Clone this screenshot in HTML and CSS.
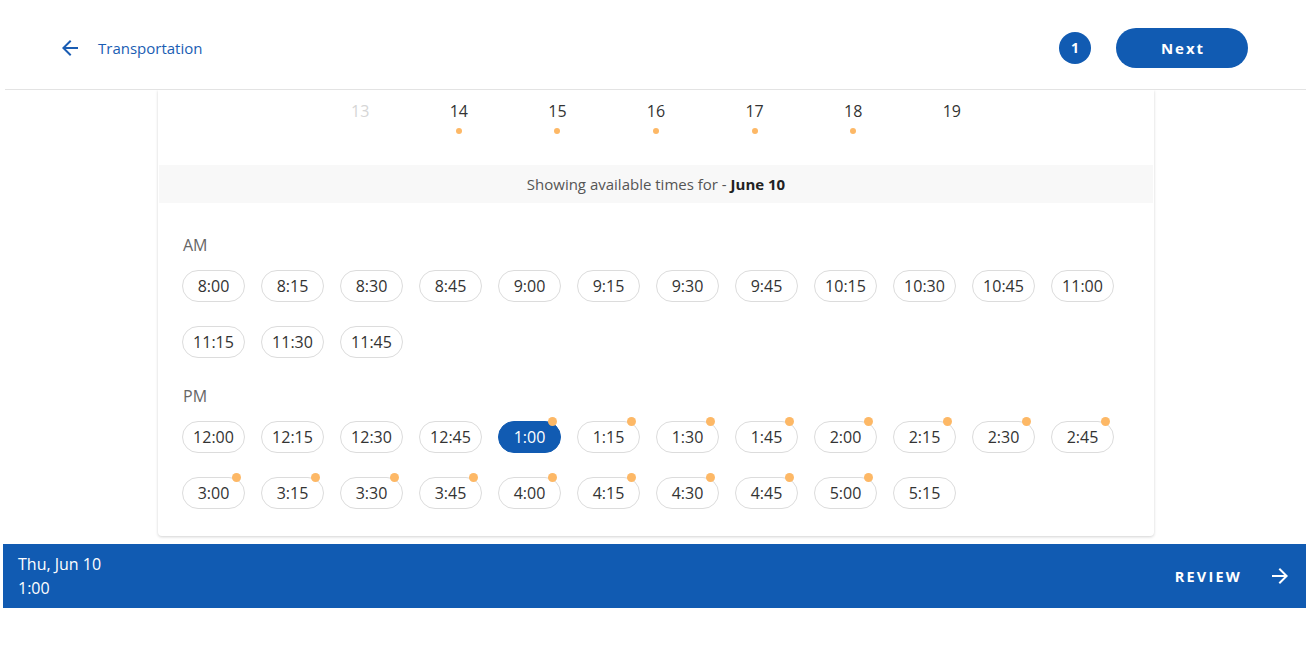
FILE: index.html
```html
<!DOCTYPE html>
<html>
<head>
<meta charset="utf-8">
<link rel="stylesheet" href="styles.css">
</head>
<body>
<div class="app">
  <header class="header">
    <a class="back">
      <svg class="back-icon" viewBox="0 0 24 24" width="24" height="24"><path d="M20 11H7.83l5.59-5.59L12 4l-8 8 8 8 1.41-1.41L7.83 13H20v-2z" fill="#1a5db3"/></svg>
      <span>Transportation</span>
    </a>
    <div class="header-right">
      <span class="badge">1</span>
      <button class="next">Next</button>
    </div>
  </header>
  <main class="scroll">
    <section class="card">
      <div class="days">
        <div class="day disabled"><span>13</span><i></i></div>
        <div class="day"><span>14</span><i class="dot"></i></div>
        <div class="day"><span>15</span><i class="dot"></i></div>
        <div class="day"><span>16</span><i class="dot"></i></div>
        <div class="day"><span>17</span><i class="dot"></i></div>
        <div class="day"><span>18</span><i class="dot"></i></div>
        <div class="day"><span>19</span><i></i></div>
      </div>
      <div class="band">Showing available times for - <b>June 10</b></div>
      <div class="slots">
        <div class="period">AM</div>
        <div class="pills">
          <span class="pill">8:00</span><span class="pill">8:15</span><span class="pill">8:30</span><span class="pill">8:45</span><span class="pill">9:00</span><span class="pill">9:15</span><span class="pill">9:30</span><span class="pill">9:45</span><span class="pill">10:15</span><span class="pill">10:30</span><span class="pill">10:45</span><span class="pill">11:00</span><span class="pill">11:15</span><span class="pill">11:30</span><span class="pill">11:45</span>
        </div>
        <div class="period pm">PM</div>
        <div class="pills">
          <span class="pill">12:00</span><span class="pill">12:15</span><span class="pill">12:30</span><span class="pill">12:45</span><span class="pill selected mark">1:00</span><span class="pill mark">1:15</span><span class="pill mark">1:30</span><span class="pill mark">1:45</span><span class="pill mark">2:00</span><span class="pill mark">2:15</span><span class="pill mark">2:30</span><span class="pill mark">2:45</span><span class="pill mark">3:00</span><span class="pill mark">3:15</span><span class="pill mark">3:30</span><span class="pill mark">3:45</span><span class="pill mark">4:00</span><span class="pill mark">4:15</span><span class="pill mark">4:30</span><span class="pill mark">4:45</span><span class="pill mark">5:00</span><span class="pill">5:15</span>
        </div>
      </div>
    </section>
  </main>
  <footer class="bar">
    <div class="summary">
      <div>Thu, Jun 10</div>
      <div>1:00</div>
    </div>
    <a class="review">
      <span>REVIEW</span>
      <svg viewBox="0 0 24 24" width="24" height="24"><path d="M12 4l-1.41 1.41L16.17 11H4v2h12.17l-5.58 5.59L12 20l8-8z" fill="#fff"/></svg>
    </a>
  </footer>
</div>
</body>
</html>
```
FILE: styles.css
```css
* { box-sizing: border-box; }
html, body { margin: 0; padding: 0; background: #fff; }
body {
  font-family: "Open Sans", "Noto Sans", sans-serif;
  color: #333;
  width: 1306px;
  height: 646px;
  overflow: hidden;
}
.app { padding-left: 3px; }

.header {
  height: 90px;
  margin-left: 2px;
  border-bottom: 1px solid #e3e3e3;
  display: flex;
  align-items: center;
  justify-content: space-between;
  padding: 6px 58px 0 53px;
}
.back {
  display: flex;
  align-items: center;
  gap: 16px;
  color: #1a5db3;
  font-size: 15px;
  cursor: pointer;
}
.back-icon { display: block; }
.header-right {
  display: flex;
  align-items: center;
  gap: 25px;
}
.badge {
  width: 32px;
  height: 32px;
  border-radius: 50%;
  background: #115bb2;
  color: #fff;
  font-weight: 700;
  font-size: 14px;
  display: flex;
  align-items: center;
  justify-content: center;
}
.next {
  width: 132px;
  height: 40px;
  border: 0;
  border-radius: 20px;
  background: #115bb2;
  color: #fff;
  font-family: inherit;
  font-weight: 700;
  font-size: 15px;
  letter-spacing: 2px;
  padding: 0 0 0 2px;
}

.scroll {
  height: 454px;
  overflow: hidden;
  padding-top: 10px;
}
.card {
  width: 996px;
  margin: -10px 0 0 155px;
  background: #fff;
  border-radius: 0 0 4px 4px;
  box-shadow: 0 1px 3px rgba(0,0,0,0.18);
}
.days {
  display: flex;
  justify-content: center;
  padding: 10px 0 31px;
}
.day {
  width: 98.6px;
  display: flex;
  flex-direction: column;
  align-items: center;
  font-size: 16px;
  line-height: 22px;
  color: #333;
}
.day i {
  display: block;
  width: 6px;
  height: 6px;
  margin-top: 6px;
  border-radius: 50%;
}
.day i.dot { background: #fdb866; }
.day.disabled { color: #d6d6d6; }

.band {
  height: 38px;
  margin: 0 1px;
  background: #f8f8f8;
  display: flex;
  align-items: center;
  justify-content: center;
  font-size: 15px;
  color: #555;
  white-space: pre;
}
.band b { color: #222; font-weight: 700; }

.slots {
  padding: 31px 24px 27px;
}
.period {
  font-size: 16px;
  line-height: 22px;
  color: #666;
  padding-left: 1px;
  margin-bottom: 14px;
}
.period.pm { margin-top: 27px; }
.pills {
  display: flex;
  flex-wrap: wrap;
  gap: 24px 16px;
}
.pill {
  position: relative;
  width: 63px;
  height: 32px;
  border: 1px solid #dcdcdc;
  border-radius: 16px;
  display: flex;
  align-items: center;
  justify-content: center;
  font-size: 16px;
  color: #333;
  background: #fff;
}
.pill.selected {
  background: #115bb2;
  border-color: #115bb2;
  color: #fff;
}
.pill.mark::after {
  content: "";
  position: absolute;
  top: -5px;
  right: 3px;
  width: 9px;
  height: 9px;
  border-radius: 50%;
  background: #fdb866;
}

.bar {
  height: 64px;
  background: #115bb2;
  color: #fff;
  display: flex;
  align-items: center;
  justify-content: space-between;
  padding: 0 14px 0 15px;
}
.summary {
  font-size: 16px;
  line-height: 24px;
}
.review {
  display: flex;
  align-items: center;
  gap: 26px;
  font-weight: 700;
  font-size: 14.5px;
  letter-spacing: 2.2px;
}
.review svg { display: block; }
```
